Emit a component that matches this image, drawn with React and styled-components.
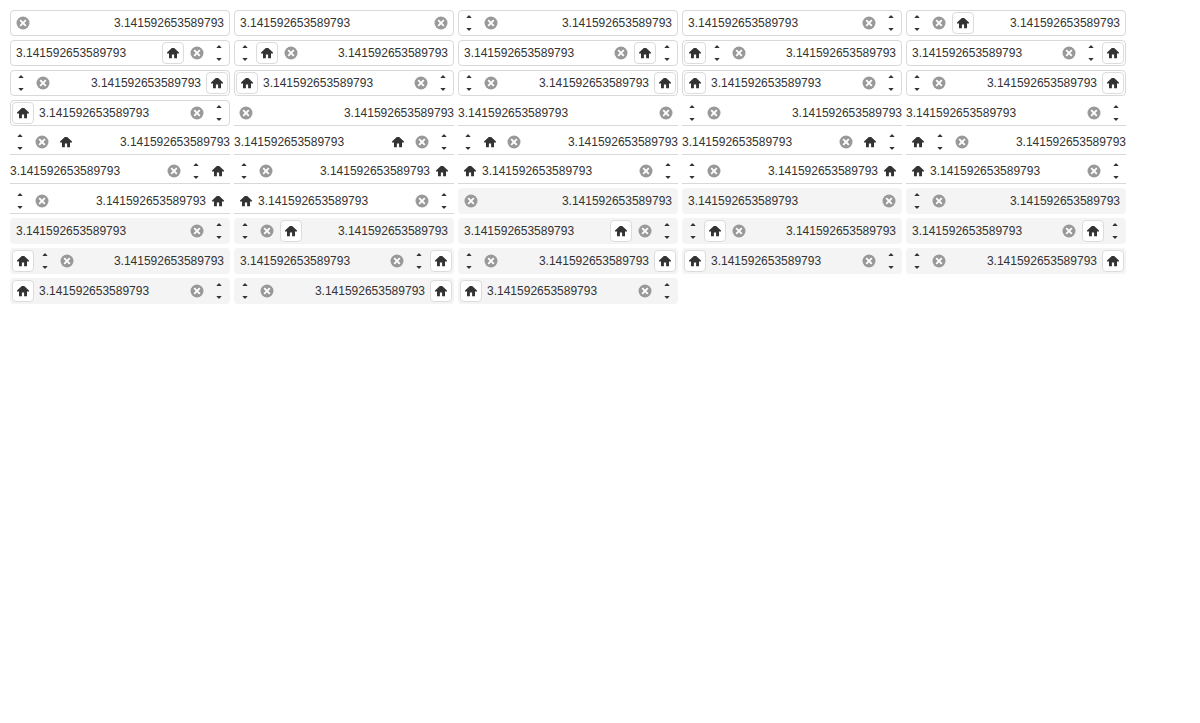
import React, { useState } from "react";
import styled, { createGlobalStyle, css } from "styled-components";

const GlobalStyle = createGlobalStyle`
  *, *::before, *::after { box-sizing: border-box; }
  body {
    margin: 0;
    background: #ffffff;
    color: #333333;
    font-family: "Liberation Sans", Arial, sans-serif;
    font-size: 12px;
  }
  button, input { font: inherit; color: inherit; }
`;

const Page = styled.main`
  display: flex;
  flex-wrap: wrap;
  align-items: flex-end;
  gap: 4px;
  padding: 10px;
`;

const frames = {
  outlined: css`
    border: 1px solid #d9d9d9;
    border-radius: 4px;
  `,
  underlined: css`
    border-bottom: 1px solid #d9d9d9;
  `,
  filled: css`
    border: 1px solid transparent;
    border-radius: 4px;
    background: #f4f4f4;
  `,
};

const Field = styled.div`
  display: flex;
  align-items: center;
  width: 220px;
  ${({ $frame }) => frames[$frame]}
`;

const ValueInput = styled.input`
  flex: 1;
  min-width: 0;
  height: 24px;
  padding: ${({ $frame, $besideButton }) =>
    $frame === "underlined" ? "0" : $besideButton ? "0 4px" : "0 5px"};
  border: 0;
  outline: 0;
  background: transparent;
  text-align: ${({ $align }) => $align};
`;

const IconButton = styled.button`
  display: flex;
  align-items: center;
  justify-content: center;
  flex: none;
  width: 24px;
  height: 24px;
  padding: 0;
  border: 0;
  background: transparent;
`;

const ClearButton = styled(IconButton)`
  color: #999999;
`;

const HomeButton = styled(IconButton)`
  ${({ $frame }) =>
    $frame !== "underlined" &&
    css`
      width: 22px;
      height: 22px;
      margin: 1px;
      border: 1px solid #dcdcdc;
      border-radius: 4px;
      background: #ffffff;
    `}
`;

const Spinner = styled.div`
  display: flex;
  flex-direction: column;
  flex: none;
  width: 20px;
  height: 24px;
`;

const SpinButton = styled(IconButton)`
  width: 20px;
  height: 12px;
`;

const ClearIcon = () => (
  <svg width="16" height="16" viewBox="0 0 16 16" aria-hidden="true">
    <circle cx="8" cy="8" r="6.5" fill="currentColor" />
    <path d="M5.2 5.2l5.6 5.6M10.8 5.2l-5.6 5.6" stroke="#ffffff" strokeWidth="1.9" />
  </svg>
);

const HomeIcon = () => (
  <svg width="16" height="16" viewBox="0 0 16 16" fill="currentColor" aria-hidden="true">
    <path d="M6.8 3h2.4L14 7.4V8.6H12V13.2H9.1V9.4H6.9v3.8H4V8.6H2V7.4z" />
  </svg>
);

const UpIcon = () => (
  <svg width="8" height="12" viewBox="0 0 8 12" fill="currentColor" aria-hidden="true">
    <path d="M3.4 4.6h1.2L6.6 7H1.4z" />
  </svg>
);

const DownIcon = () => (
  <svg width="8" height="12" viewBox="0 0 8 12" fill="currentColor" aria-hidden="true">
    <path d="M3.4 7.4h1.2L6.6 5H1.4z" />
  </svg>
);

const arrangements = [
  ["clear", "value"],
  ["value", "clear"],
  ["spin", "clear", "value"],
  ["value", "clear", "spin"],
  ["spin", "clear", "home", "value"],
  ["value", "home", "clear", "spin"],
  ["spin", "home", "clear", "value"],
  ["value", "clear", "home", "spin"],
  ["home", "spin", "clear", "value"],
  ["value", "clear", "spin", "home"],
  ["spin", "clear", "value", "home"],
  ["home", "value", "clear", "spin"],
  ["spin", "clear", "value", "home"],
  ["home", "value", "clear", "spin"],
  ["spin", "clear", "value", "home"],
  ["home", "value", "clear", "spin"],
];

function NumberField({ frame, parts }) {
  const [value, setValue] = useState(String(Math.PI));
  const step = (by) => setValue((v) => String((Number(v) || 0) + by));
  const at = parts.indexOf("value");
  const align = parts.indexOf("clear") < at ? "right" : "left";
  const besideButton = parts[align === "left" ? at - 1 : at + 1] === "home";

  const render = {
    value: () => (
      <ValueInput
        key="value"
        type="text"
        inputMode="decimal"
        aria-label="Number"
        value={value}
        onChange={(e) => setValue(e.target.value)}
        $frame={frame}
        $align={align}
        $besideButton={besideButton}
      />
    ),
    clear: () => (
      <ClearButton key="clear" type="button" aria-label="Clear" onClick={() => setValue("")}>
        <ClearIcon />
      </ClearButton>
    ),
    home: () => (
      <HomeButton key="home" type="button" aria-label="Home" $frame={frame}>
        <HomeIcon />
      </HomeButton>
    ),
    spin: () => (
      <Spinner key="spin">
        <SpinButton type="button" aria-label="Increase" onClick={() => step(1)}>
          <UpIcon />
        </SpinButton>
        <SpinButton type="button" aria-label="Decrease" onClick={() => step(-1)}>
          <DownIcon />
        </SpinButton>
      </Spinner>
    ),
  };

  return <Field $frame={frame}>{parts.map((part) => render[part]())}</Field>;
}

export default function App() {
  return (
    <>
      <GlobalStyle />
      <Page>
        {Object.keys(frames).map((frame) =>
          arrangements.map((parts, i) => (
            <NumberField key={`${frame}-${i}`} frame={frame} parts={parts} />
          ))
        )}
      </Page>
    </>
  );
}
